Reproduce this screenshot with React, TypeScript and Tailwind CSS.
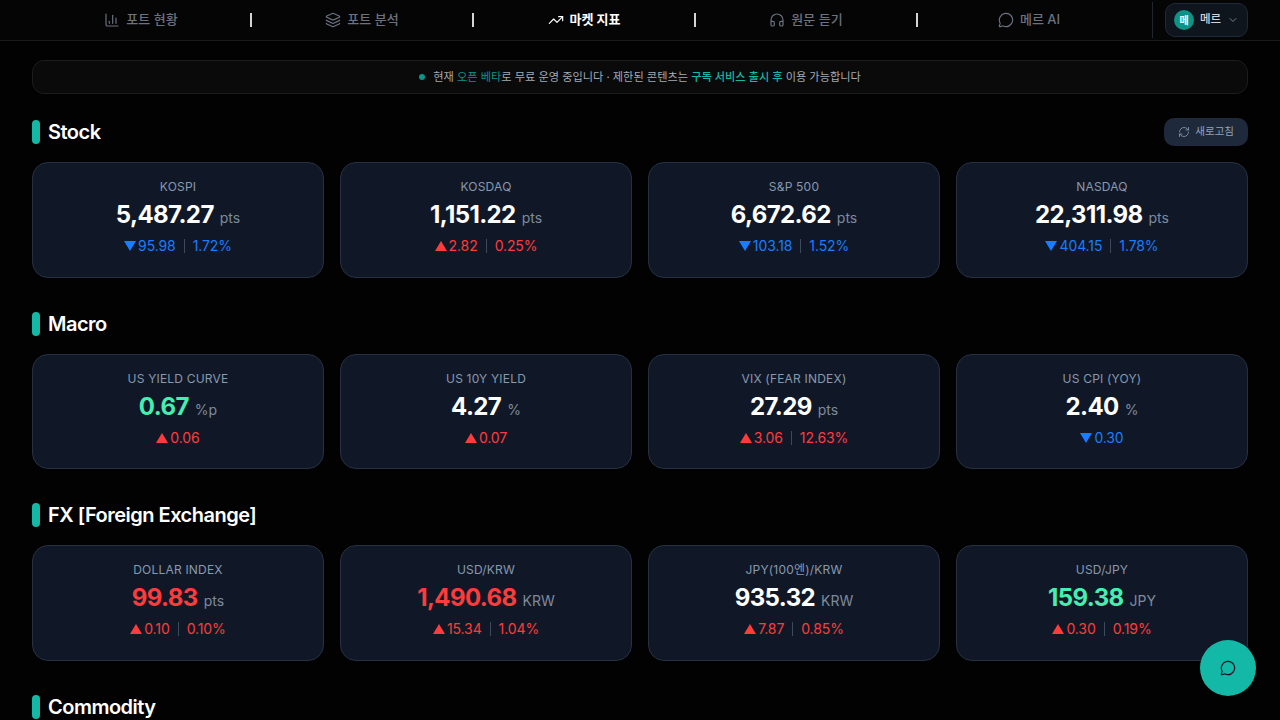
import { BarChart3, ChevronDown, Headphones, Layers, MessageCircle, RefreshCw, TrendingUp } from "lucide-react";

type Item = {
  name: string;
  value: string;
  unit: string;
  change: string;
  percent?: string;
  up: boolean;
  valueColor?: string;
};

const stock: Item[] = [
  { name: "KOSPI", value: "5,487.27", unit: "pts", change: "95.98", percent: "1.72%", up: false },
  { name: "KOSDAQ", value: "1,151.22", unit: "pts", change: "2.82", percent: "0.25%", up: true },
  { name: "S&P 500", value: "6,672.62", unit: "pts", change: "103.18", percent: "1.52%", up: false },
  { name: "NASDAQ", value: "22,311.98", unit: "pts", change: "404.15", percent: "1.78%", up: false },
];

const macro: Item[] = [
  { name: "US YIELD CURVE", value: "0.67", unit: "%p", change: "0.06", up: true, valueColor: "text-[#45efb0]" },
  { name: "US 10Y YIELD", value: "4.27", unit: "%", change: "0.07", up: true },
  { name: "VIX (FEAR INDEX)", value: "27.29", unit: "pts", change: "3.06", percent: "12.63%", up: true },
  { name: "US CPI (YOY)", value: "2.40", unit: "%", change: "0.30", up: false },
];

const fx: Item[] = [
  { name: "DOLLAR INDEX", value: "99.83", unit: "pts", change: "0.10", percent: "0.10%", up: true, valueColor: "text-[#ff3b3b]" },
  { name: "USD/KRW", value: "1,490.68", unit: "KRW", change: "15.34", percent: "1.04%", up: true, valueColor: "text-[#ff3b3b]" },
  { name: "JPY(100엔)/KRW", value: "935.32", unit: "KRW", change: "7.87", percent: "0.85%", up: true },
  { name: "USD/JPY", value: "159.38", unit: "JPY", change: "0.30", percent: "0.19%", up: true, valueColor: "text-[#45efb0]" },
];

const nav = [
  { label: "포트 현황", icon: BarChart3, width: "w-[220px]" },
  { label: "포트 분석", icon: Layers, width: "w-[222px]" },
  { label: "마켓 지표", icon: TrendingUp, width: "w-[222px]", active: true },
  { label: "원문 듣기", icon: Headphones, width: "w-[222px]" },
  { label: "메르 AI", icon: MessageCircle, width: "w-[222px]" },
];

function Triangle({ up }: { up: boolean }) {
  return (
    <svg width="12" height="10" viewBox="0 0 12 10" className="mr-0.5 shrink-0" fill="currentColor">
      <path d={up ? "M6 0 L12 10 L0 10 Z" : "M0 0 L12 0 L6 10 Z"} />
    </svg>
  );
}

function Card({ item }: { item: Item }) {
  const tone = item.up ? "text-[#ff3b3b]" : "text-[#1a7cff]";
  return (
    <div className="flex h-[115.5px] flex-col items-center rounded-2xl border border-[#263041] bg-[#101828] pt-[17px]">
      <div className="text-xs leading-[14px] tracking-[0.2px] text-[#8899ad]">{item.name}</div>
      <div className="mt-[5px] flex items-baseline gap-1.5">
        <span className={`text-2xl font-[650] tracking-[-0.6px] ${item.valueColor ?? "text-white"}`}>{item.value}</span>
        <span className="text-sm text-[#7f8a9b]">{item.unit}</span>
      </div>
      <div className={`mt-[5px] flex items-center text-sm leading-5 tracking-[-0.1px] ${tone}`}>
        <Triangle up={item.up} />
        <span>{item.change}</span>
        {item.percent ? (
          <>
            <span className="mx-2 h-[14px] w-px bg-[#3d4a5e]" />
            <span>{item.percent}</span>
          </>
        ) : null}
      </div>
    </div>
  );
}

function Section({ title, items, action }: { title: string; items: Item[]; action?: boolean }) {
  return (
    <section>
      <div className="flex h-6 items-center justify-between">
        <div className="flex items-center gap-2">
          <span className="h-6 w-2 rounded-full bg-[#14b8a6]" />
          <h2 className="text-xl font-semibold leading-6 tracking-tight text-white">{title}</h2>
        </div>
        {action ? (
          <button className="flex h-7 items-center gap-[5px] rounded-[10px] bg-[#1e293b] px-[14px] text-[10.5px] text-[#94a3b8]">
            <RefreshCw size={12} strokeWidth={1.5} />
            새로고침
          </button>
        ) : null}
      </div>
      {items.length > 0 ? (
        <div className="mt-[18px] grid grid-cols-4 gap-4">
          {items.map((item) => (
            <Card key={item.name} item={item} />
          ))}
        </div>
      ) : null}
    </section>
  );
}

export default function App() {
  return (
    <div className="h-screen overflow-hidden bg-[#020202] font-['Inter','Noto_Sans_CJK_KR',sans-serif]">
      <header className="flex h-[41px] items-center border-b border-[#1a1a1a] bg-[#050505] pl-8 pr-8">
        <nav className="flex items-center">
          {nav.map((entry, index) => {
            const Icon = entry.icon;
            return (
              <div key={entry.label} className={`flex items-center ${entry.width}`}>
                <div
                  className={`flex flex-1 items-center justify-center gap-[6px] text-[13px] ${
                    entry.active ? "font-bold text-white" : "font-medium text-[#6b7280]"
                  }`}
                >
                  <Icon size={16} strokeWidth={1.75} />
                  {entry.label}
                </div>
                {index < nav.length - 1 ? <span className="h-[14px] w-0.5 bg-[#d4d4d4]" /> : null}
              </div>
            );
          })}
        </nav>
        <span className="ml-3 h-9 w-px bg-[#1e2530]" />
        <button className="ml-auto flex h-[34px] w-[83px] items-center gap-[6px] rounded-[10px] border border-[#1e293b] bg-[#0f151d] pl-2 text-[11.5px] font-medium text-[#d1d5db]">
          <span className="flex h-[20px] w-[20px] items-center justify-center rounded-full bg-[#0d9488] text-[10px] font-semibold text-white">
            메
          </span>
          메르
          <ChevronDown size={12} strokeWidth={1.5} className="text-[#9ca3af]" />
        </button>
      </header>

      <main className="px-8 pt-[19px]">
        <div className="flex h-[34px] items-center justify-center gap-2 rounded-xl border border-[#1c1c1c] bg-[#0a0a0a] text-[11.2px] text-[#a3aab5]">
          <span className="h-[6px] w-[6px] rounded-full bg-[#0d9488]" />
          <p>
            현재 <span className="text-[#0d9488]">오픈 베타</span>로 무료 운영 중입니다 · 제한된 콘텐츠는{" "}
            <span className="font-medium text-[#14b8a6]">구독 서비스 출시 후</span> 이용 가능합니다
          </p>
        </div>

        <div className="mt-[26px] flex flex-col gap-[34px]">
          <Section title="Stock" items={stock} action />
          <Section title="Macro" items={macro} />
          <Section title="FX [Foreign Exchange]" items={fx} />
          <Section title="Commodity" items={[]} />
        </div>
      </main>

      <button className="fixed bottom-6 right-6 flex h-14 w-14 items-center justify-center rounded-full bg-[#14b8a6] text-[#0b1220]">
        <MessageCircle size={16} strokeWidth={1.75} />
      </button>
    </div>
  );
}
